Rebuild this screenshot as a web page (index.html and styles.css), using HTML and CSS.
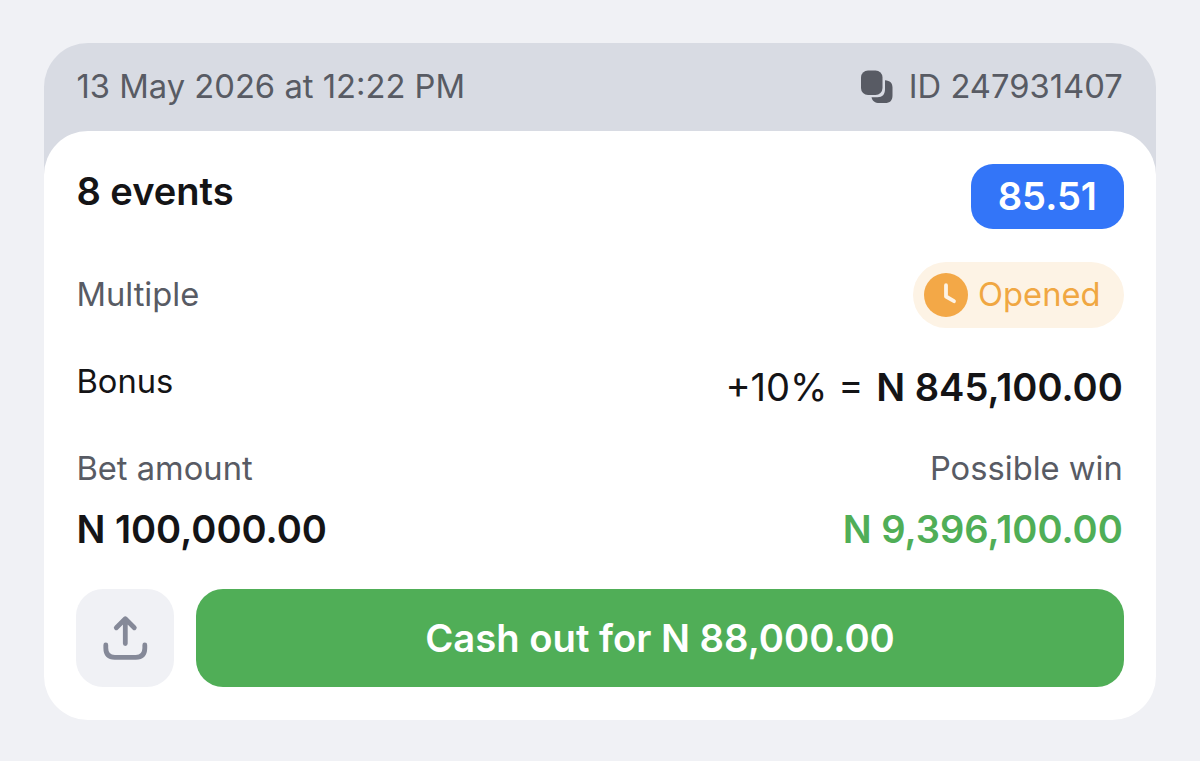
FILE: index.html
```html
<!DOCTYPE html>
<html lang="en">
<head>
<meta charset="utf-8">
<title>Bet slip</title>
<link rel="stylesheet" href="styles.css">
</head>
<body>
<article class="slip">
  <header class="slip-head">
    <span class="date">13 May 2026 at 12:22 PM</span>
    <span class="bet-id">
      <svg class="copy" viewBox="0 0 34 34"><path d="M25 10.200c5 .3 7.500 2.800 7.500 7.300v8c0 5-2.500 7.500-7.500 7.500h-5.500c-4.500 0-7.300-2-8-5.800H17.500c5 0 7.500-3 7.500-8z" fill="#585b64"/><rect x="1" y="0.500" width="21.500" height="24.500" rx="7" fill="#585b64"/></svg>
      <span class="id-text">ID 247931407</span>
    </span>
  </header>
  <section class="card">
    <div class="row row-events"><h1 class="events">8 events</h1><span class="odds"><span class="odds-text">85.51</span></span></div>
    <div class="row row-type"><span class="type">Multiple</span>
      <span class="status"><svg class="clock" viewBox="0 0 44 44"><circle cx="22" cy="22" r="22" fill="#f3a847"/><path d="M22 12.200v11.300l8 4.700" fill="none" stroke="#fdf3e5" stroke-width="3.800" stroke-linecap="round" stroke-linejoin="round"/></svg><span class="status-text">Opened</span></span></div>
    <div class="row row-bonus"><span class="bonus">Bonus</span><span class="bonus-sum"><span class="percent">+10% =</span><b class="bonus-amount">N 845,100.00</b></span></div>
    <div class="row row-labels"><span class="bet-label">Bet amount</span><span class="win-label">Possible win</span></div>
    <div class="row row-amounts"><b class="bet-value">N 100,000.00</b><b class="win-value">N 9,396,100.00</b></div>
    <div class="actions">
      <button class="share" aria-label="Share"><svg class="share-icon" viewBox="0 0 46 46"><path d="M23.300 28.600V4M14.300 12.800L23.300 3.800l9 9M3.800 30v3q0 9.300 9 9.300h21q9 0 9-9.300v-3" fill="none" stroke="#858998" stroke-width="4.800" stroke-linecap="round" stroke-linejoin="round"/></svg></button>
      <button class="cashout"><span class="cashout-text">Cash out for N 88,000.00</span></button>
    </div>
  </section>
</article>
</body>
</html>
```
FILE: styles.css
```css
* { box-sizing: border-box; }
body { margin: 0; height: 761px; padding: 43px 43.6px 41px; background: #f0f1f5; font-family: Inter, sans-serif; color: #141416; overflow: hidden; }
.slip { height: 677px; border-radius: 44px; background: linear-gradient(#d8dbe3 200px, transparent 200px); }
.slip-head { height: 88px; padding: 0 33.6px 2px 32.8px; display: flex; align-items: center; justify-content: space-between; font-size: 32.75px; color: #585b64; }
.slip-head, .row, .cashout { white-space: nowrap; }
.bet-id { display: flex; align-items: center; gap: 15px; }
.copy { width: 34px; height: 34px; margin-top: 2px; }
.card { height: 589px; padding: 33px 32.8px; border-radius: 44px; background: #fff; }
.row { display: flex; justify-content: space-between; font-size: 32.7px; line-height: 44px; }
.row-events { height: 98px; padding-top: 5px; }
.events { margin: 0; font-size: 38.1px; font-weight: 600; }
.odds { width: 152.5px; height: 65px; margin-top: -5px; padding-bottom: 2px; border-radius: 22px; background: #3375f8; color: #fff; display: flex; align-items: center; justify-content: center; font-size: 38.1px; font-weight: 600; }
.row-type { height: 97px; color: #585b64; }
.type { padding-top: 10px; }
.status { width: 210.5px; height: 65.500px; border-radius: 33px; background: #fdf3e5; color: #f0a742; display: flex; align-items: center; padding-left: 11px; gap: 10px; }
.status-text { padding-bottom: 2px; }
.clock { width: 44px; height: 44px; }
.row-bonus { height: 86px; }
.bonus-sum { display: flex; gap: 12.8px; padding: 6px 0.8px 0 0; font-size: 38.1px; }
.bonus-amount, .bet-value, .win-value { font-weight: 600; }
.row-labels { height: 62px; color: #585b64; padding: 1px 0.8px 0 0; }
.row-amounts { height: 82px; padding-right: 0.8px; font-size: 38.1px; }
.win-value { color: #50ae57; }
.actions { display: flex; gap: 22px; height: 98px; }
.share { width: 98px; border: 0; border-radius: 27px; background: #f0f1f5; padding: 0; display: grid; place-items: center; }
.share-icon { width: 46px; height: 46px; }
.cashout { flex: 1; border: 0; border-radius: 27px; background: #50ae57; color: #fff; font: 600 38.2px Inter, sans-serif; }
```
